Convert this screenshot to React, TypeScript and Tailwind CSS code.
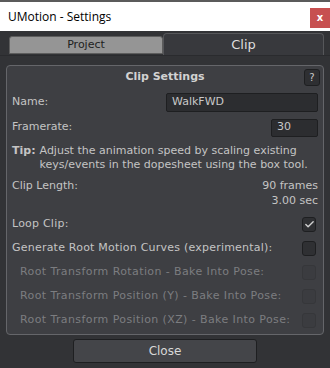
import { Check } from 'lucide-react';

const font = { fontFamily: '"DejaVu Sans", Verdana, sans-serif' };

const Box = ({ checked, disabled }: { checked?: boolean; disabled?: boolean }) => (
  <div
    className={`w-[14px] h-[15px] rounded-[3px] border flex items-center justify-center ${
      disabled ? 'border-[#36373a] bg-[#3b3c40]' : 'border-[#1e1f21] bg-[#2f3033]'
    }`}
  >
    {checked && <Check size={11} strokeWidth={3} className="text-[#d0d0d0]" />}
  </div>
);

const Row = ({ label, checked, disabled }: { label: string; checked?: boolean; disabled?: boolean }) => (
  <div className="flex items-center justify-between h-[24px] pr-[2px]">
    <span className={disabled ? 'pl-[8px] tracking-[0.4px] text-[#7c7d80]' : 'tracking-[0.22px] text-[#c4c4c4]'}>
      {label}
    </span>
    <Box checked={checked} disabled={disabled} />
  </div>
);

export default function App() {
  return (
    <div className="w-[330px] h-[368px] bg-[#323336] flex flex-col overflow-hidden" style={font}>
      {/* title bar */}
      <div className="h-[2px] bg-[#5b5b5b]" />
      <div className="h-[29px] bg-white flex items-center justify-between">
        <span className="pl-[8px] text-[12px] text-black" style={{ fontFamily: '"Open Sans", sans-serif' }}>
          UMotion - Settings
        </span>
        <div className="w-[20px] h-[20px] mt-[2px] bg-[#c75050] flex items-center justify-center text-white text-[10px] font-bold">
          x
        </div>
      </div>

      {/* tabs */}
      <div className="flex items-end h-[25px] pl-[9px] border-b border-[#2a2b2e]">
        <div className="w-[154px] h-[18px] mb-[1px] bg-[#959595] border border-[#5d5d5d] rounded-t-[3px] flex items-center justify-center text-[11px] text-[#1e1e1e]">
          Project
        </div>
        <div className="w-[161px] h-[22px] bg-[#38393d] border border-b-0 border-[#56575a] rounded-t-[4px] flex items-center justify-center text-[13px] text-[#dedede]">
          Clip
        </div>
      </div>

      {/* panel */}
      <div className="mx-[6px] mt-[9px] border border-[#65666a] rounded-[4px] bg-[#3e3f43] px-[5px] pb-[2px] text-[11px] text-[#c4c4c4]">
        <div className="relative h-[24px] flex items-center justify-center pb-[2px] font-bold text-[#d2d2d2]">
          Clip Settings
          <div className="absolute right-[-2px] top-[3px] w-[16px] h-[17px] rounded-[3px] border border-[#1e1f21] bg-[#2e2f32] flex items-center justify-center text-[10px] font-normal text-[#c8c8c8]">
            ?
          </div>
        </div>

        <div className="flex items-center justify-between h-[25px]">
          <span>Name:</span>
          <div className="w-[152px] h-[19px] border border-[#1e1f21] rounded-[2px] bg-[#2c2d30] flex items-center pl-[5px] text-[#c8c8c8]">
            WalkFWD
          </div>
        </div>
        <div className="flex items-center justify-between h-[25px]">
          <span>Framerate:</span>
          <div className="w-[47px] h-[18px] border border-[#1e1f21] rounded-[2px] bg-[#2c2d30] flex items-center pl-[5px] text-[#c8c8c8]">
            30
          </div>
        </div>

        <div className="flex mt-[4px] leading-[14px]">
          <span className="font-bold pr-[4px]">Tip:</span>
          <span>Adjust the animation speed by scaling existing keys/events in the dopesheet using the box tool.</span>
        </div>

        <div className="flex justify-between mt-[6px] leading-[15px]">
          <span>Clip Length:</span>
          <div className="flex flex-col items-end">
            <span>90 frames</span>
            <span>3.00 sec</span>
          </div>
        </div>

        <div className="mt-[4px]">
          <Row label="Loop Clip:" checked />
          <Row label="Generate Root Motion Curves (experimental):" />
          <Row label="Root Transform Rotation - Bake Into Pose:" disabled />
          <Row label="Root Transform Position (Y) - Bake Into Pose:" disabled />
          <Row label="Root Transform Position (XZ) - Bake Into Pose:" disabled />
        </div>
      </div>

      <div className="flex justify-center mt-[4px]">
        <button className="w-[184px] h-[24px] rounded-[3px] border border-[#1e1f21] bg-[#444549] text-[12px] text-[#d8d8d8]">
          Close
        </button>
      </div>
    </div>
  );
}
